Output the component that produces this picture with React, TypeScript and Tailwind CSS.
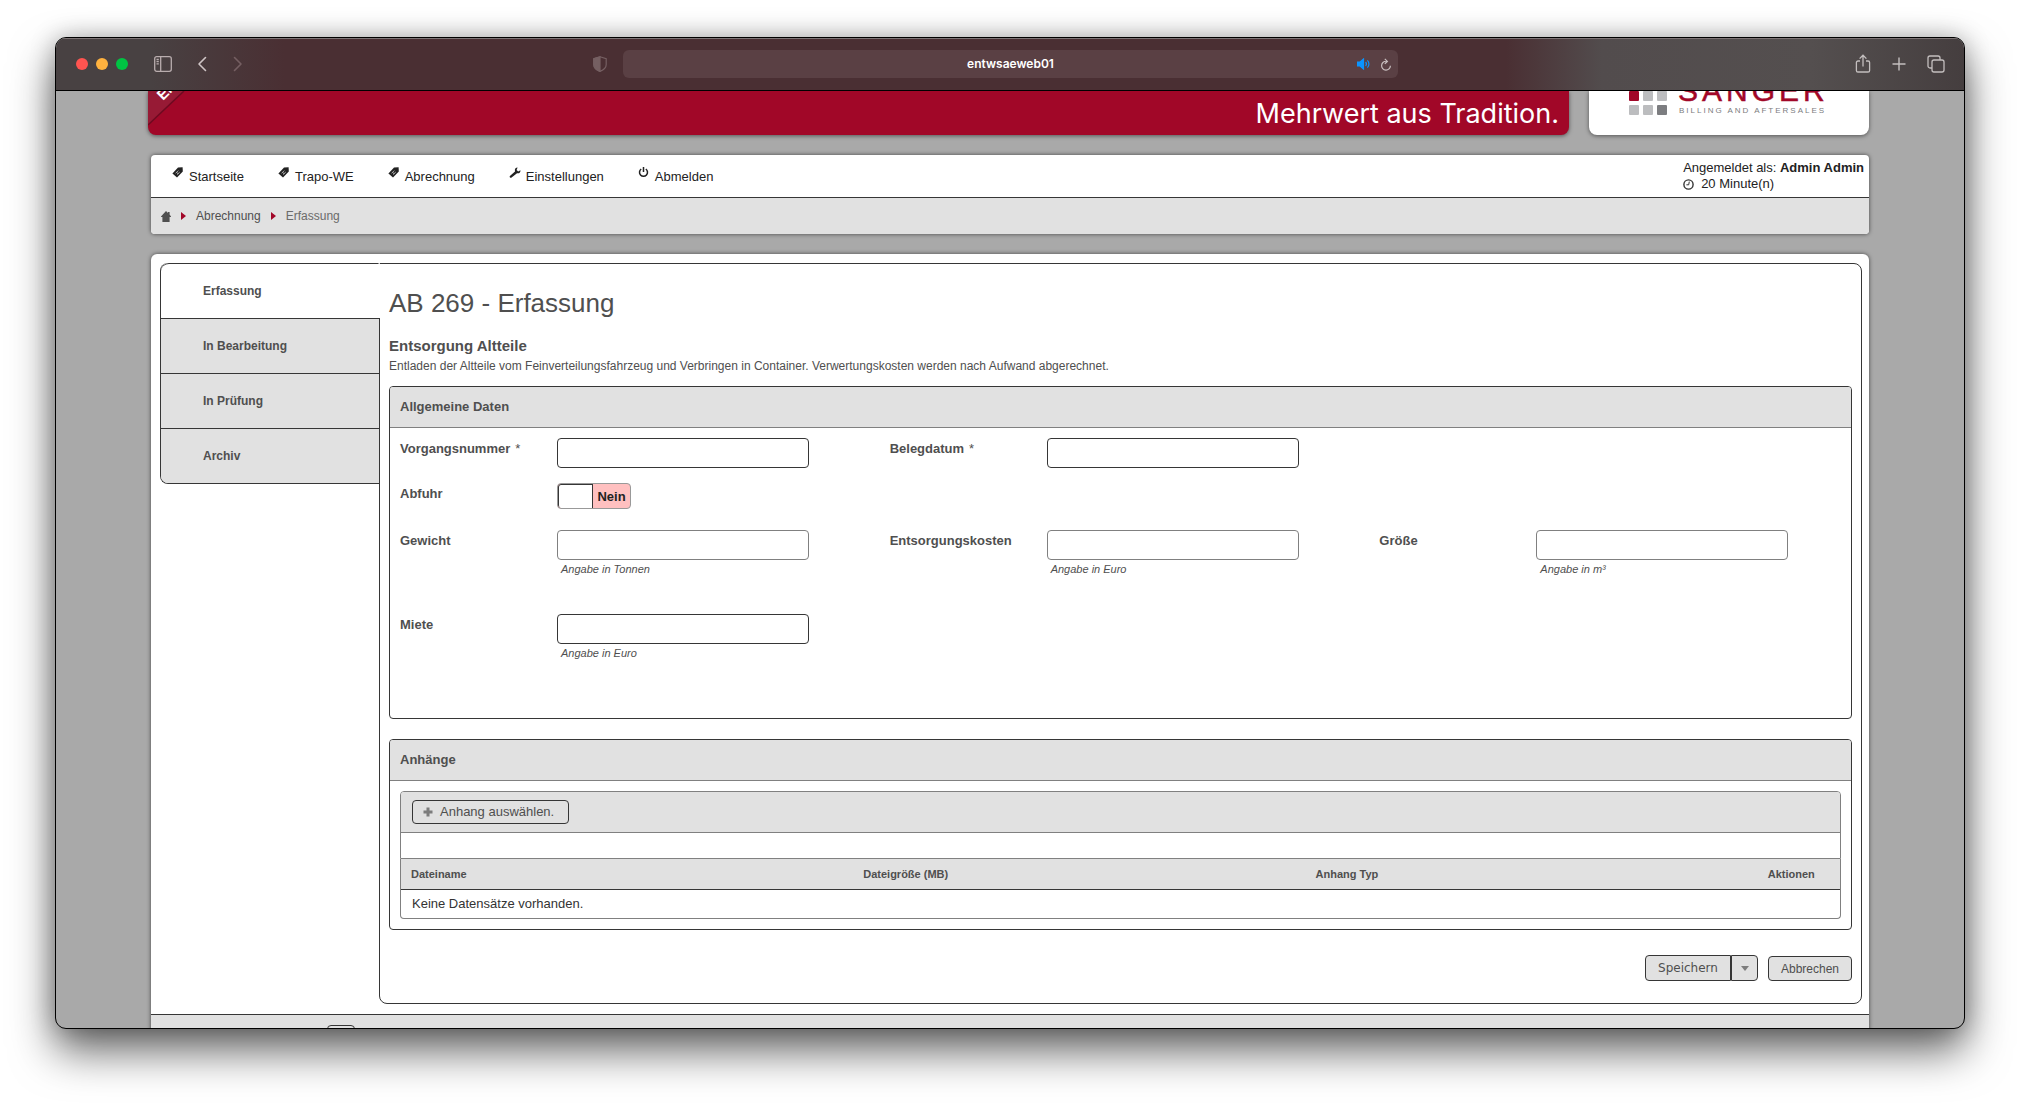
import React from 'react';

const TagIcon = () => (
  <svg width="12" height="12" viewBox="0 0 12 12" aria-hidden="true">
    <path d="M6 0.4 10.6 0.3 10.8 4.6 5 10.6 0.4 6.4z" fill="#222" />
    <path d="M3.6 6.2 6.4 3.6M5 7.6 7.8 5M4.6 5.2 6.4 7" stroke="#c9c9c9" strokeWidth="0.8" />
  </svg>
);

const WrenchIcon = () => (
  <svg width="12" height="12" viewBox="0 0 12 12" aria-hidden="true">
    <path d="M8.6 0.6 7.6 3 9.2 4.4 11.4 3.2C11.8 5.4 10 6.8 8 6.2L2.6 10.6C1.6 11.4 0 10 0.9 9L6 4.4C5.4 2.2 6.6 0.6 8.6 0.6z" fill="#222" />
  </svg>
);

const PowerIcon = () => (
  <svg width="12" height="12" viewBox="0 0 12 12" fill="none" stroke="#222" strokeWidth="1.5" aria-hidden="true">
    <path d="M3.2 2A4 4 0 1 0 7.8 2M5.5 0V5" />
  </svg>
);

const navItems = [
  { label: 'Startseite', icon: <TagIcon /> },
  { label: 'Trapo-WE', icon: <TagIcon /> },
  { label: 'Abrechnung', icon: <TagIcon /> },
  { label: 'Einstellungen', icon: <WrenchIcon /> },
  { label: 'Abmelden', icon: <PowerIcon /> },
];

const Toolbar: React.FC = () => (
  <div className="flex h-[53px] shrink-0 items-center border-b border-black bg-[linear-gradient(90deg,#484142_0%,#484142_5%,#4a2f33_12%,#4a2f33_76%,#524c4d_81%,#544f4f_92%,#453e3f_100%)] shadow-[inset_0_1px_0_#7d7475]">
    <div className="flex flex-1 items-center pl-5">
      <div className="flex gap-2">
        <span className="size-3 rounded-full bg-[#ff5450]" />
        <span className="size-3 rounded-full bg-[#ffb23f]" />
        <span className="size-3 rounded-full bg-[#00c443]" />
      </div>
      <button aria-label="Seitenleiste" className="ml-[26px]">
        <svg width="18" height="16" viewBox="0 0 18 16" fill="none" stroke="#b9adae" strokeWidth="1.3">
          <rect x="0.7" y="0.7" width="16.6" height="14.6" rx="2" />
          <path d="M6.7 1V15M2.5 3.5H4.8M2.5 5.7H4.8M2.5 7.9H4.8" />
        </svg>
      </button>
      <button aria-label="Zurück" className="ml-6">
        <svg width="12" height="16" viewBox="0 0 12 16" fill="none" stroke="#cfc5c6" strokeWidth="1.6" strokeLinecap="round" strokeLinejoin="round">
          <path d="M9.5 1.5 3 8 9.5 14.5" />
        </svg>
      </button>
      <button aria-label="Vorwärts" className="ml-6">
        <svg width="12" height="16" viewBox="0 0 12 16" fill="none" stroke="#755f62" strokeWidth="1.6" strokeLinecap="round" strokeLinejoin="round">
          <path d="M2.5 1.5 9 8 2.5 14.5" />
        </svg>
      </button>
      <svg className="mr-4 ml-auto" width="14" height="16" viewBox="0 0 14 16" fill="none" stroke="#755f62" strokeWidth="1.2" aria-hidden="true">
        <path d="M7 0.8 13.2 2.8V8.5C13.2 11.8 10.5 14 7 15.4 3.5 14 0.8 11.8 0.8 8.5V2.8z" />
        <path d="M7 0.8V15.4C3.5 14 0.8 11.8 0.8 8.5V2.8z" fill="#755f62" />
      </svg>
    </div>
    <div className="flex h-7 w-[775px] items-center rounded-md bg-[#5a4044] px-[6px]">
      <span className="w-10" />
      <span className="flex-1 text-center font-[Inter] text-xs font-semibold text-white">entwsaeweb01</span>
      <span className="flex w-10 items-center justify-end gap-2">
        <svg width="15" height="12" viewBox="0 0 15 12" fill="none" stroke="#0a94ff" strokeWidth="1.2" aria-hidden="true">
          <path d="M0.5 4H3L6.5 1V11L3 8H0.5z" fill="#0a94ff" />
          <path d="M8.6 4A3 3 0 0 1 8.6 8M10.4 2.4A5 5 0 0 1 10.4 9.6" />
        </svg>
        <svg width="12" height="13" viewBox="0 0 12 13" fill="none" stroke="#c9bfc0" strokeWidth="1.2" aria-hidden="true">
          <path d="M6.5 3.3A4.4 4.4 0 1 0 10.4 7.7M4.8 0.8 7.4 3.4 4.8 5.8" />
        </svg>
      </span>
    </div>
    <div className="flex flex-1 items-center justify-end gap-[21px] pr-[19px] text-[#c4bfbf]">
      <button aria-label="Teilen">
        <svg width="16" height="20" viewBox="0 0 16 20" fill="none" stroke="currentColor" strokeWidth="1.3">
          <path d="M5 7H3A1.6 1.6 0 0 0 1.4 8.6V16.4A1.6 1.6 0 0 0 3 18H13A1.6 1.6 0 0 0 14.6 16.4V8.6A1.6 1.6 0 0 0 13 7H11M8 12.5V1.5M4.6 4.6 8 1.2 11.4 4.6" />
        </svg>
      </button>
      <button aria-label="Neuer Tab">
        <svg width="14" height="14" viewBox="0 0 14 14" stroke="currentColor" strokeWidth="1.4">
          <path d="M7 0.5V13.5M0.5 7H13.5" />
        </svg>
      </button>
      <button aria-label="Tabübersicht">
        <svg width="18" height="18" viewBox="0 0 18 18" fill="none" stroke="currentColor" strokeWidth="1.3">
          <rect x="5" y="5" width="12" height="12" rx="2" />
          <path d="M5 13H3A2 2 0 0 1 1 11V3A2 2 0 0 1 3 1H11A2 2 0 0 1 13 3V5" />
        </svg>
      </button>
    </div>
  </div>
);

const Banner: React.FC = () => (
  <header className="-ml-[3px] flex h-11 shrink-0 gap-5">
    <div className="relative flex flex-1 items-end justify-end overflow-hidden rounded-b-lg bg-[#a10728] pr-[10px] pb-[5px] shadow-[0_1px_4px_rgba(0,0,0,0.5)]">
      <svg className="absolute top-0 left-0" width="40" height="44" viewBox="0 0 40 44" aria-hidden="true">
        <path d="M0 0H36L0 34z" fill="#971a35" />
        <path d="M0 34 36 0" stroke="#6d0a20" strokeWidth="1.5" />
        <text x="15" y="10" transform="rotate(-45 15 10)" fontFamily="Liberation Sans" fontWeight="bold" fontSize="15" fill="#fff">EN</text>
      </svg>
      <span className="font-[Inter] text-[27px] leading-8 text-white">Mehrwert aus Tradition.</span>
    </div>
    <div className="w-[280px] overflow-hidden rounded-b-lg bg-white shadow-[0_1px_4px_rgba(0,0,0,0.5)]">
      <svg width="280" height="44" viewBox="0 0 280 44" fontFamily="Liberation Sans" role="img" aria-label="Sänger Billing and Aftersales">
        <rect x="40" y="0" width="10" height="10" rx="1" fill="#a10728" />
        <rect x="54" y="0" width="10" height="10" rx="1" fill="#bcbdbf" />
        <rect x="68" y="0" width="10" height="10" rx="1" fill="#bcbdbf" />
        <rect x="40" y="14" width="10" height="10" rx="1" fill="#bcbdbf" />
        <rect x="54" y="14" width="10" height="10" rx="1" fill="#bcbdbf" />
        <rect x="68" y="14" width="10" height="10" rx="1" fill="#7c7d80" />
        <text x="89" y="10" fontSize="30" letterSpacing="4" fill="#a10728" stroke="#a10728" strokeWidth="0.5">SÄNGER</text>
        <text x="90" y="22" fontSize="8" letterSpacing="2" fill="#7c7d80">BILLING AND AFTERSALES</text>
      </svg>
    </div>
  </header>
);

const Arrow = () => (
  <svg className="mx-[10px]" width="5" height="8" viewBox="0 0 5 8" aria-hidden="true">
    <path d="M0 0 5 4 0 8z" fill="#a10728" />
  </svg>
);

const Navigation: React.FC = () => (
  <div className="mt-5 shrink-0 overflow-hidden rounded bg-white shadow-[0_0_4px_rgba(0,0,0,0.6)]">
    <div className="flex h-[43px] justify-between border-b border-[#363636] pr-[5px] pl-[21px] text-[13px] text-[#222]">
      <nav className="flex items-center gap-[34px] pt-[2px]">
        {navItems.map((item) => (
          <a key={item.label} href="#" className="flex gap-[5px] leading-5">
            {item.icon}
            <span>{item.label}</span>
          </a>
        ))}
      </nav>
      <div className="pt-[5px] leading-4">
        <div>
          Angemeldet als: <b>Admin Admin</b>
        </div>
        <div className="flex items-center gap-[7px]">
          <svg width="11" height="11" viewBox="0 0 11 11" fill="none" stroke="#333" strokeWidth="1.4" aria-hidden="true">
            <circle cx="5.5" cy="5.5" r="4.6" />
            <path d="M6.3 2.6 5.7 5.8H3.4" strokeWidth="1" />
          </svg>
          20 Minute(n)
        </div>
      </div>
    </div>
    <div className="flex h-9 items-center bg-[#e1e1e1] pl-[10px] text-xs text-[#4f4f4f]">
      <a href="#" aria-label="Start">
        <svg width="10" height="11" viewBox="0 0 10 11" aria-hidden="true">
          <path d="M5 0 7 2V1H8.6V3.6L10 5.4V6H8.6V11H1.4V6H0V5.4z" fill="#4f4f4f" />
        </svg>
      </a>
      <Arrow />
      <a href="#">Abrechnung</a>
      <Arrow />
      <span className="text-[#6b6b6b]">Erfassung</span>
    </div>
  </div>
);

const Tabs: React.FC = () => (
  <div className="relative z-10 w-[220px] shrink-0 self-start overflow-hidden rounded-l-lg border-b border-l border-[#363636] text-xs font-bold">
    <button className="block h-[55px] w-full rounded-tl-lg border-t border-r-2 border-t-[#363636] border-r-white bg-white pl-[42px] text-left">Erfassung</button>
    {['In Bearbeitung', 'In Prüfung', 'Archiv'].map((tab) => (
      <button key={tab} className="block h-[55px] w-full border-t border-r border-[#363636] bg-[#e1e1e1] pl-[42px] text-left">
        {tab}
      </button>
    ))}
  </div>
);

type FieldProps = { id: string; label: string; required?: boolean; hint?: string; light?: boolean; className?: string };

const Field: React.FC<FieldProps> = ({ id, label, required, hint, light, className }) => (
  <div className={`flex ${className ?? ''}`}>
    <label htmlFor={id} className="w-[157px] shrink-0 pt-[3px] leading-4 font-bold">
      {label}
      {required && <span className="ml-[5px] font-normal">*</span>}
    </label>
    <div>
      <input
        id={id}
        type="text"
        className={`block h-[30px] w-[252px] rounded border bg-white px-2 ${light ? 'border-[#808080]' : 'border-[#363636]'}`}
      />
      {hint && <div className="mt-px pl-1 text-[11px] leading-4 italic">{hint}</div>}
    </div>
  </div>
);

const Panel: React.FC<{ title: string; className: string; children: React.ReactNode }> = ({ title, className, children }) => (
  <section className={`rounded border border-[#363636] ${className}`}>
    <h3 className="h-[41px] rounded-t-[3px] border-b border-[#808080] bg-[#e1e1e1] px-[10px] leading-10 font-bold">{title}</h3>
    {children}
  </section>
);

const GeneralData: React.FC = () => (
  <Panel title="Allgemeine Daten" className="mt-[10px]">
    <div className="grid grid-cols-3 gap-x-7 px-[10px] pt-[10px] pb-[57px]">
      <Field id="vorgangsnummer" label="Vorgangsnummer" required className="h-[45px]" />
      <Field id="belegdatum" label="Belegdatum" required />
      <div />
      <div className="col-span-3 flex h-[47px] items-start">
        <label htmlFor="abfuhr" className="w-[157px] pt-[3px] leading-4 font-bold">
          Abfuhr
        </label>
        <button id="abfuhr" role="switch" aria-checked="false" className="flex h-[26px] w-[74px] overflow-hidden rounded border border-[#999] bg-[#ffc0c0] text-[#222]">
          <span className="h-full w-[35px] rounded-l-[3px] border-t border-r border-l border-[#363636] bg-white" />
          <span className="flex-1 text-center leading-[26px] font-bold">Nein</span>
        </button>
      </div>
      <Field id="gewicht" label="Gewicht" hint="Angabe in Tonnen" light className="h-[84px]" />
      <Field id="entsorgungskosten" label="Entsorgungskosten" hint="Angabe in Euro" light />
      <Field id="groesse" label="Größe" hint="Angabe in m³" light />
      <Field id="miete" label="Miete" hint="Angabe in Euro" />
    </div>
  </Panel>
);

const Attachments: React.FC = () => (
  <Panel title="Anhänge" className="mt-5">
    <div className="p-[10px]">
      <div className="rounded-t border border-[#808080]">
        <div className="flex h-[41px] items-center rounded-t-[3px] border-b border-[#808080] bg-[#e1e1e1] px-[11px]">
          <button className="flex h-6 w-[157px] items-center gap-[7px] rounded border border-[#363636] pl-[10px]">
            <svg width="10" height="10" viewBox="0 0 10 10" aria-hidden="true">
              <path d="M3.5 0.5H6.5V3.5H9.5V6.5H6.5V9.5H3.5V6.5H0.5V3.5H3.5z" fill="#7d7d7d" />
            </svg>
            Anhang auswählen.
          </button>
        </div>
        <div className="h-[25px]" />
      </div>
      <div className="overflow-hidden rounded-b border border-t-0 border-[#808080]">
        <table className="w-full table-fixed">
          <thead className="bg-[#e1e1e1] text-left text-[11px]">
            <tr className="h-[30px] border-b border-[#363636]">
              <th className="w-11/35 px-[10px]">Dateiname</th>
              <th className="w-11/35 px-[10px]">Dateigröße (MB)</th>
              <th className="w-11/35 px-[10px]">Anhang Typ</th>
              <th className="px-[10px]">Aktionen</th>
            </tr>
          </thead>
          <tbody>
            <tr className="h-[29px] text-[#333]">
              <td colSpan={4} className="px-[11px]">Keine Datensätze vorhanden.</td>
            </tr>
          </tbody>
        </table>
      </div>
    </div>
  </Panel>
);

const Actions: React.FC = () => (
  <div className="mt-[25px] flex items-end justify-end gap-[10px] text-xs">
    <div className="flex h-[26px]">
      <button className="w-[86px] rounded-l border border-[#363636] bg-[#e1e1e1] font-['DejaVu_Sans']">Speichern</button>
      <button aria-label="Weitere Optionen" className="flex w-[27px] items-center justify-center rounded-r border border-[#363636] bg-[#e1e1e1]">
        <svg width="8" height="5" viewBox="0 0 8 5" aria-hidden="true">
          <path d="M0 0H8L4 5z" fill="#7d7d7d" />
        </svg>
      </button>
    </div>
    <button className="h-[25px] w-[84px] rounded border border-[#363636] bg-[#e1e1e1]">Abbrechen</button>
  </div>
);

export default function App() {
  return (
    <div className="h-screen overflow-hidden bg-white px-[55px] pt-[37px] pb-[74px] font-['Liberation_Sans',Arial,sans-serif]">
      <div className="flex h-full flex-col overflow-hidden rounded-[11px] border border-black bg-[#a9a9a9] shadow-[0_22px_44px_rgba(0,0,0,0.6),0_0_24px_rgba(0,0,0,0.25)]">
        <Toolbar />
        <div className="flex min-h-0 flex-1 flex-col overflow-hidden px-[95px]">
          <Banner />
          <Navigation />
          <div className="mt-5 rounded-t-md bg-white pt-[9px] text-[13px] text-[#4f4f4f] shadow-[0_0_4px_rgba(0,0,0,0.6)]">
            <div className="flex pr-[7px] pl-[9px]">
              <Tabs />
              <main className="-ml-px flex-1 rounded-r-lg rounded-bl-lg border border-[#363636] pr-[9px] pb-[22px] pl-[9px]">
                <h1 className="pt-[23px] text-[26px] leading-8">AB 269 - Erfassung</h1>
                <h2 className="mt-[17px] text-[15px] leading-5 font-bold">Entsorgung Altteile</h2>
                <p className="text-xs leading-5">
                  Entladen der Altteile vom Feinverteilungsfahrzeug und Verbringen in Container. Verwertungskosten werden nach Aufwand abgerechnet.
                </p>
                <GeneralData />
                <Attachments />
                <Actions />
              </main>
            </div>
            <footer className="mt-[10px] h-[60px] border-t border-[#363636] bg-[#e1e1e1] pt-[10px] pl-[176px]">
              <button aria-label="Seite" className="block h-6 w-7 rounded border border-[#363636]" />
            </footer>
          </div>
        </div>
      </div>
    </div>
  );
}
